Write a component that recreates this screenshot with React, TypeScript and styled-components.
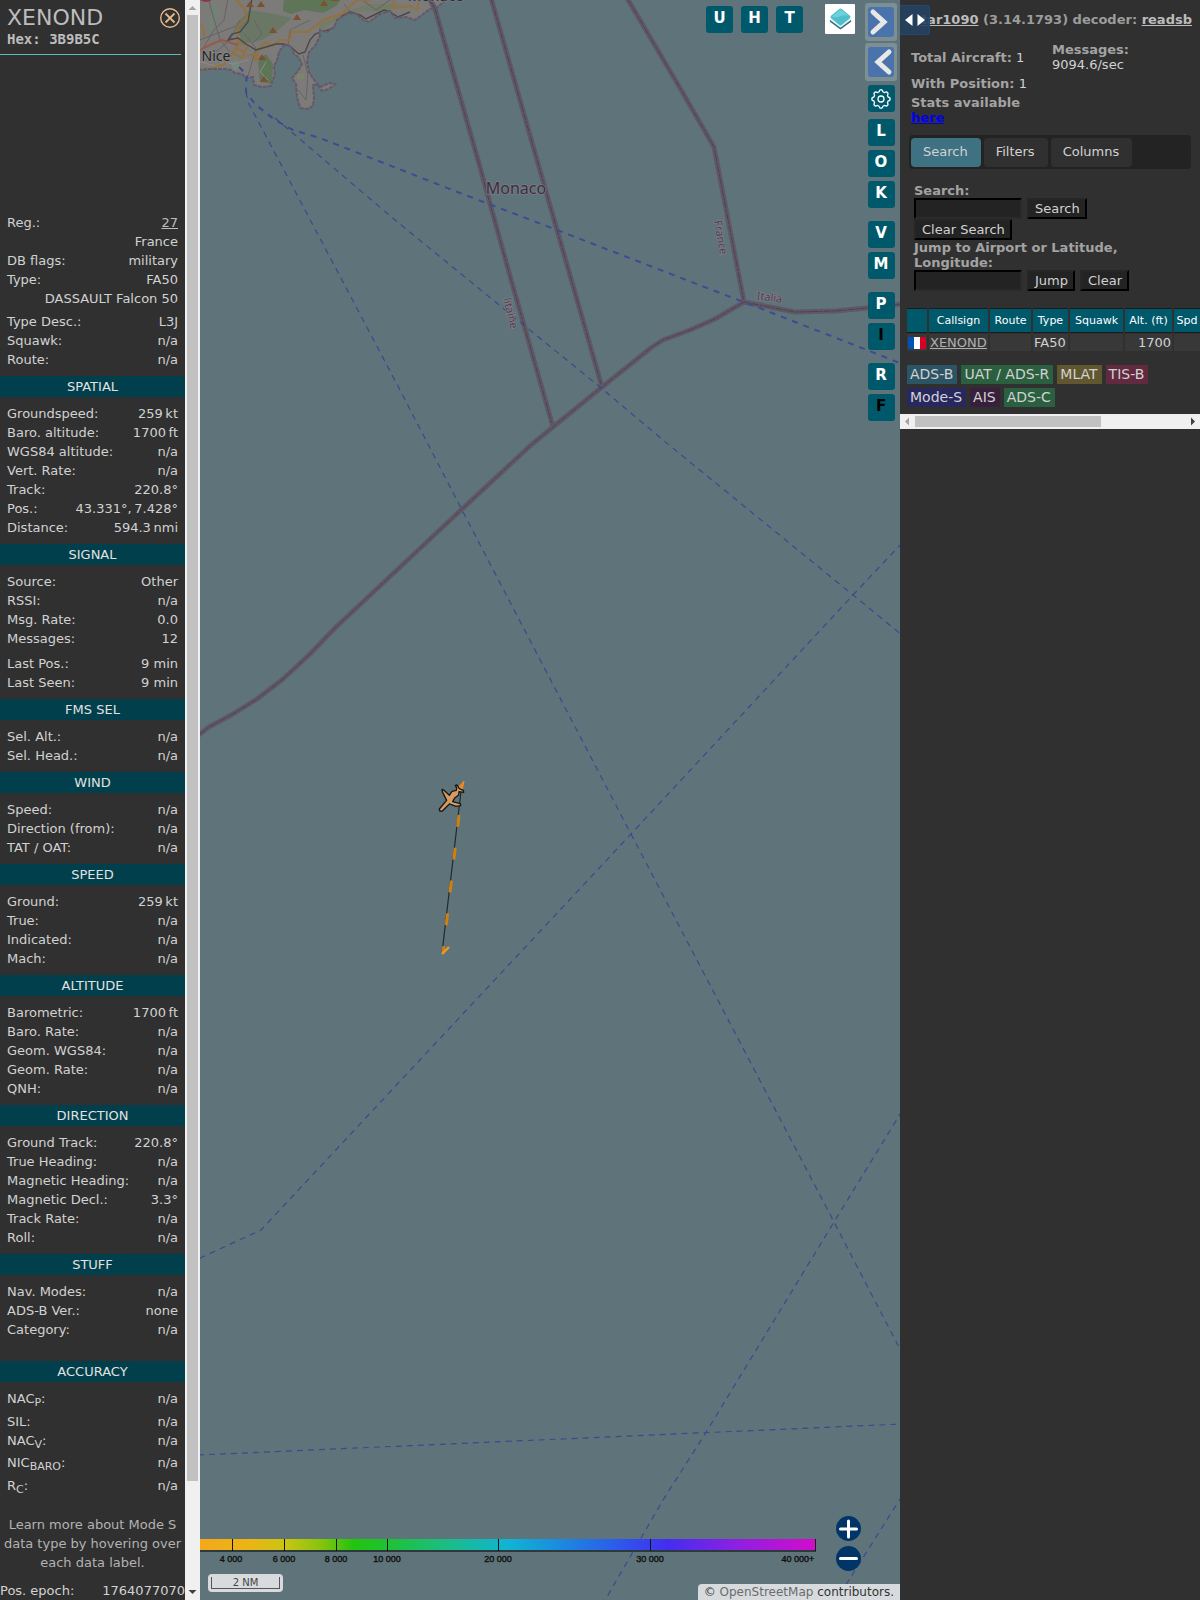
import React from "react";
import styled, { createGlobalStyle } from "styled-components";

const Global = createGlobalStyle`
  * { box-sizing: border-box; }
  html, body { margin: 0; background: #303030; }
  body { font-family: "DejaVu Sans", Verdana, sans-serif; font-size: 13px; color: #d2d2d2; }
  button, input { font-family: inherit; font-size: inherit; color: inherit; }
`;

const Page = styled.div`
  display: grid;
  grid-template-columns: 200px minmax(0, 1fr) 300px;
  height: 100vh;
  overflow: hidden;
`;

/* ---------- left panel ---------- */
const InfoPanel = styled.aside`
  display: flex;
  min-width: 0;
  overflow: hidden;
`;
const InfoBody = styled.div`
  width: 185px;
  flex: none;
`;
const InfoHead = styled.header`
  height: 55px;
  margin-right: 4px;
  padding: 5px 0 0 7px;
  border-bottom: 1px solid #5fb9c1;
  position: relative;
`;
const Callsign = styled.h1`
  margin: 0;
  font-size: 22px;
  line-height: 26px;
  font-weight: 400;
  color: #bdbdbd;
`;
const Hex = styled.div`
  font: bold 14px/16px "DejaVu Sans Mono", monospace;
  color: #bdbdbd;
`;
const Close = styled.button`
  position: absolute;
  right: 0;
  top: 8px;
  width: 22px;
  height: 20px;
  padding: 0;
  border: 0;
  background: none;
  svg { display: block; }
`;
const Photo = styled.div`
  height: 151px;
`;
const Group = styled.section<{ $tail?: number }>`
  padding: 7px 7px ${(p) => p.$tail ?? 7}px;
`;
const GroupTitle = styled.h2`
  margin: 0;
  background: #003f4b;
  color: #e2e2e2;
  font-size: 13px;
  line-height: 21px;
  font-weight: 400;
  text-align: center;
`;
const Row = styled.div<{ $gap?: number; $h?: number }>`
  display: flex;
  justify-content: space-between;
  height: ${(p) => p.$h ?? 19}px;
  line-height: 19px;
  margin-top: ${(p) => p.$gap ?? 0}px;
  white-space: nowrap;
  sub { font-size: 11px; line-height: 0; vertical-align: -3px; }
  a { color: #bdbdbd; }
`;
const Hint = styled.p`
  margin: 0;
  padding: 9px 3px 0;
  text-align: center;
  line-height: 19px;
  color: #b2b2b2;
`;
const Epoch = styled.div`
  display: flex;
  justify-content: space-between;
  margin-top: 9px;
  line-height: 19px;
`;

const ScrollTrack = styled.div<{ $row?: boolean }>`
  display: flex;
  flex-direction: ${(p) => (p.$row ? "row" : "column")};
  flex: none;
  ${(p) => (p.$row ? "height" : "width")}: 15px;
  background: #f0f0f0;
`;
const ScrollArrow = styled.span`
  width: 15px;
  height: 15px;
  flex: none;
  svg { display: block; }
`;
const ThumbArea = styled.div<{ $row?: boolean }>`
  flex: 1;
  padding: ${(p) => (p.$row ? "2px 0" : "0 2px")};
`;
const Thumb = styled.div<{ $row?: boolean }>`
  background: #c1c1c1;
  width: ${(p) => (p.$row ? "69%" : "100%")};
  height: ${(p) => (p.$row ? "100%" : "93.4%")};
`;

type Item = { l: React.ReactNode; v?: React.ReactNode; gap?: number; h?: number };
const na = "n/a";
const identity: Item[] = [
  { l: "Reg.:", v: <a href="#reg">27</a> },
  { l: "", v: "France" },
  { l: "DB flags:", v: "military" },
  { l: "Type:", v: "FA50" },
  { l: "", v: "DASSAULT Falcon 50" },
  { l: "Type Desc.:", v: "L3J", gap: 4 },
  { l: "Squawk:", v: na },
  { l: "Route:", v: na },
];
const groups: { title: string; tail?: number; items: Item[] }[] = [
  { title: "SPATIAL", items: [
    { l: "Groundspeed:", v: "259\u202fkt" },
    { l: "Baro. altitude:", v: "1700\u202fft" },
    { l: "WGS84 altitude:", v: na },
    { l: "Vert. Rate:", v: na },
    { l: "Track:", v: "220.8°" },
    { l: "Pos.:", v: "43.331°,\u202f7.428°" },
    { l: "Distance:", v: "594.3\u202fnmi" },
  ] },
  { title: "SIGNAL", items: [
    { l: "Source:", v: "Other" },
    { l: "RSSI:", v: na },
    { l: "Msg. Rate:", v: "0.0" },
    { l: "Messages:", v: "12" },
    { l: "Last Pos.:", v: "9 min", gap: 6 },
    { l: "Last Seen:", v: "9 min" },
  ] },
  { title: "FMS SEL", items: [{ l: "Sel. Alt.:", v: na }, { l: "Sel. Head.:", v: na }] },
  { title: "WIND", items: [{ l: "Speed:", v: na }, { l: "Direction (from):", v: na }, { l: "TAT / OAT:", v: na }] },
  { title: "SPEED", items: [
    { l: "Ground:", v: "259\u202fkt" },
    { l: "True:", v: na },
    { l: "Indicated:", v: na },
    { l: "Mach:", v: na },
  ] },
  { title: "ALTITUDE", items: [
    { l: "Barometric:", v: "1700\u202fft" },
    { l: "Baro. Rate:", v: na },
    { l: "Geom. WGS84:", v: na },
    { l: "Geom. Rate:", v: na },
    { l: "QNH:", v: na },
  ] },
  { title: "DIRECTION", items: [
    { l: "Ground Track:", v: "220.8°" },
    { l: "True Heading:", v: na },
    { l: "Magnetic Heading:", v: na },
    { l: "Magnetic Decl.:", v: "3.3°" },
    { l: "Track Rate:", v: na },
    { l: "Roll:", v: na },
  ] },
  { title: "STUFF", tail: 22, items: [
    { l: "Nav. Modes:", v: na },
    { l: "ADS-B Ver.:", v: "none" },
    { l: "Category:", v: na },
  ] },
  { title: "ACCURACY", items: [
    { l: <>NAC<sub>P</sub>:</>, v: na, h: 23 },
    { l: "SIL:", v: na },
    { l: <>NAC<sub>V</sub>:</>, v: na, h: 22 },
    { l: <>NIC<sub>BARO</sub>:</>, v: na, h: 23 },
    { l: <>R<sub>C</sub>:</>, v: na, h: 23 },
  ] },
];

const Rows = ({ items }: { items: Item[] }) => (
  <>
    {items.map((it, i) => (
      <Row key={i} $gap={it.gap} $h={it.h}>
        <span>{it.l}</span>
        <span>{it.v}</span>
      </Row>
    ))}
  </>
);

/* ---------- map ---------- */
const MapArea = styled.main`
  position: relative;
  background: #5e747a;
  overflow: hidden;
`;
const MapSvg = styled.svg`
  display: block;
  width: 100%;
  height: 100%;
`;
const TopBar = styled.div`
  position: absolute;
  top: 4px;
  right: 45px;
  display: flex;
  align-items: center;
  gap: 8px;
`;
const KeyButton = styled.button<{ $off?: boolean }>`
  width: 27px;
  height: 27px;
  padding: 0 0 2px;
  border: 0;
  border-radius: 3px;
  background: #00596b;
  color: ${(p) => (p.$off ? "#000" : "#fff")};
  font-size: 15px;
  line-height: 25px;
  font-weight: 700;
  text-align: center;
  svg { display: block; margin: 2px auto 0; }
`;
const LayersButton = styled.button`
  width: 30px;
  height: 30px;
  margin-left: 14px;
  padding: 0;
  border: 0;
  border-radius: 1px;
  background: #fff;
  svg { display: block; }
`;
const SideBar = styled.div`
  position: absolute;
  top: 3px;
  right: 3px;
  display: flex;
  flex-direction: column;
  align-items: center;
`;
const KeyGroup = styled.div<{ $top: number }>`
  display: flex;
  flex-direction: column;
  gap: 4px;
  margin-top: ${(p) => p.$top}px;
`;
const ArrowButton = styled.button`
  width: 32px;
  height: 38px;
  margin-bottom: 2px;
  padding: 4px 3px;
  border: 0;
  border-radius: 3px;
  background: #7c8f95;
  svg { display: block; }
`;
const Legend = styled.div`
  position: absolute;
  left: 0;
  bottom: 30px;
  svg { display: block; }
`;
const ScaleBox = styled.div`
  position: absolute;
  left: 8px;
  bottom: 8px;
  padding: 3px;
  border-radius: 4px;
  background: #d7dbdd;
`;
const ScaleInner = styled.div`
  width: 69px;
  height: 12px;
  border: 1px solid #555;
  border-top: 0;
  font-size: 10px;
  line-height: 11px;
  text-align: center;
  color: #444;
`;
const ZoomBox = styled.div`
  position: absolute;
  right: 39px;
  bottom: 29px;
  display: flex;
  flex-direction: column;
  gap: 5px;
`;
const ZoomButton = styled.button`
  width: 25px;
  height: 25px;
  padding: 0;
  border: 0;
  border-radius: 50%;
  background: #013568;
  svg { display: block; }
`;
const Attribution = styled.div`
  position: absolute;
  right: 0;
  bottom: 0;
  padding: 0 6px;
  border-radius: 4px 0 0 0;
  background: #d7dbdd;
  color: #333;
  font-size: 12px;
  line-height: 16px;
  white-space: nowrap;
  a { color: #6b6b6b; text-decoration: none; }
`;

const coast =
  "M-2,70 L12,69 25,69 31,70 35,73 42,74 46,78 53,77 54,85 62,87 71,86 73,79 75,75 74,66 77,60 79,52 84,45 91,46 94,54 99,58 102,64 98,71 92,78 96,84 97,97 100,108 107,109 113,106 114,98 113,85 118,85 122,91 129,89 135,84 130,83 120,87 114,80 109,72 107,62 109,52 115,46 120,36 120,30 127,32 134,27 137,20 148,13 157,14 163,20 169,22 180,14 190,11 195,18 206,17 215,20 222,15 230,9 236,8 240,5 248,-2 248,-10 -2,-10Z";
const borders = [
  "M229,-2 L235,9 278,160 310,276 353,427",
  "M291,-2 L337,160 402,387",
  "M427,-2 L480,88 514,147 544,302",
  "M702,304 L667,308 635,311 595,312 544,302 515,319 490,330 463,340 452,347 402,387 353,427 331,445 261,510 135,628 110,654 83,679 57,699 33,714 9,727 -4,737",
];
const ferries = [
  "M75,118 L195,220 260,273 315,318 400,387 463,440 653,595 702,635",
  "M46,92 L48,102 200,390 262,510 431,834 634,1222 702,1353",
  "M702,543 L653,595 431,834 61,1230 -2,1259",
  "M702,1111 L634,1222 505,1434 463,1500 404,1602",
  "M-2,1455 L702,1424",
  "M702,1496 L647,1583 635,1602",
];
const peaks = [[50, 4], [61, 4], [73, 30], [97, 17], [124, 3], [62, 57], [64, 79], [135, -2]];

const ChartMap = () => (
  <MapSvg viewBox="0 0 700 1600" preserveAspectRatio="xMidYMin slice" role="img" aria-label="Map">
    <defs><clipPath id="land"><path d={coast} /></clipPath></defs>
    <path d={coast} fill="#7c7b79" />
    <g clipPath="url(#land)" fill="none">
      <path d="M84,-2 L83,11 91,14 104,10 123,13 136,6 142,-2Z" fill="#5f7558" />
      <path d="M36,24 L50,10 75,14 92,18 76,32 62,40 42,44Z" fill="#6b7765" />
      <path d="M58,62 L66,54 73,64 72,84 60,82Z" fill="#5f7558" />
      <path d="M118,24 L150,10 170,4 200,4 190,10 150,12 120,30Z" fill="#727c66" />
      <path d="M12,-2 L20,12 14,28 8,34M0,-2Z" fill="#748177" />
      <path d="M31,62 L38,60 40,70 33,70Z" fill="#74897b" />
      <path d="M97,74 L104,73 104,79 97,79Z" fill="#7b8569" />
      <path d="M2,50 L14,30 24,20 28,-2 M8,-2 L20,40 30,52 M0,40 L36,26 M6,60 L30,40 40,20 M44,34 L56,48 48,76 M86,60 L90,30 110,20 M103,55 L108,75 106,100 98,90 M54,20 L62,34 52,44 M144,4 L152,14 M160,-2 L176,10 190,0" stroke="#646464" />
      <path d="M0,62 L16,66 24,62 34,64 48,60M66,62 L60,72 68,80" stroke="#8b8b89" />
      <path d="M35,-2 L45,10 47,18 38,26 37,36 39,44 M-2,70 L12,68 24,64 32,54 M47,56 L55,54 56,62 58,50 66,42 72,46 80,40 90,40 91,32 108,32 124,19 142,14 152,4 160,-2 M192,8 L195,-2 M192,8 L210,6 217,10 220,-2 M-2,20 L4,30 4,38 M152,-2 L170,1" stroke="#94713d" strokeWidth="2" />
      <path d="M39,42 L47,47 42,58 33,53Z M35,48 L45,52" stroke="#94713d" strokeWidth="2" />
      <path d="M-2,51 L12,44 22,40 38,45" stroke="#9b5846" strokeWidth="2" />
      <path d="M52,-2 L48,22 40,32 32,34 28,40 38,38 46,44 56,50 76,44 84,44 92,48 99,54 105,52 110,40 115,34 134,28 142,16 150,12 160,15 166,19 174,15 184,10 190,12 198,17 210,12" stroke="#484848" strokeWidth="1.4" />
      <ellipse cx="6" cy="-3" rx="7" ry="5" fill="#8a3848" />
      {peaks.map(([x, y]) => (
        <path key={`${x}-${y}`} d={`M${x},${y - 3} l4,6 h-8z`} fill="#7b5130" />
      ))}
    </g>
    <path d={coast} fill="none" stroke="#665868" strokeWidth="2" strokeDasharray="4 1" />
    {borders.map((d) => (
      <g key={d} fill="none" strokeLinejoin="round">
        <path d={d} stroke="#5e5966" strokeWidth="5" />
        <path d={d} stroke="#553d52" strokeWidth="1" strokeDasharray="7 1 3 1" />
      </g>
    ))}
    <path d="M39,67 L47,75 46,83 46,92 55,104 75,120 93,130 120,138 260,193 357,230 533,298 544,302 667,350 702,364" fill="none" stroke="#414a90" strokeWidth="2" strokeDasharray="6 6" />
    {ferries.map((d) => (
      <path key={d} d={d} fill="none" stroke="#3f478e" strokeWidth="1.2" strokeDasharray="6 5" />
    ))}
    <g fontFamily="Noto Sans, sans-serif" stroke="#7b7d86" strokeWidth="1.5" paintOrder="stroke" textAnchor="middle">
      <text x="16" y="61" fontSize="14" fill="#202020" stroke="#888">Nice</text>
      <text x="236" y="1" fontSize="15" fill="#302c30">Monaco</text>
      <text x="316" y="194" fontSize="16" fill="#3d2c3e">Monaco</text>
      <g fontSize="11" fill="#553d52">
        <text transform="translate(307 314) rotate(76)">litaine</text>
        <text transform="translate(517 238) rotate(80)">France</text>
        <text transform="translate(569 301) rotate(8)">Italia</text>
      </g>
    </g>
    <path d="M262,783 L242,953" stroke="#202a2d" strokeWidth="1.2" />
    <path d="M259,815 L243,953" stroke="#cf8010" strokeWidth="3" strokeDasharray="12 21" />
    <path d="M242,954 L249,947" stroke="#ef9a28" strokeWidth="2.4" />
    <path d="M257,789 L264,781 262,791Z" fill="#ef8b20" stroke="#ef8b20" />
    <path transform="translate(220 760) scale(.3333)" d="M60,154 L58,147 80,121 67,95 66,88 72,91 88,106 96,94 109,91 110,84 106,76 111,75 118,86 130,91 131,97 117,95 116,105 104,114 98,125 121,131 122,137 108,139 88,132 67,153Z" fill="#d69b60" stroke="#171717" strokeWidth="4" strokeLinejoin="round" />
  </MapSvg>
);

const ticks: [number, string, number][] = [
  [32, "4 000", 31], [84, "6 000", 84], [136, "8 000", 136], [187, "10 000", 187], [298, "20 000", 298], [450, "30 000", 450], [615, "40 000+", 598],
];

const Chevron = ({ back }: { back?: boolean }) => (
  <svg width="26" height="30" viewBox="0 0 26 30">
    <rect width="26" height="30" rx="3" fill="#4973aa" />
    <path d={back ? "M21,5 L10,15 21,25" : "M5,5 L16,15 5,25"} fill="none" stroke="#e8e8e8" strokeWidth="5" strokeLinecap="round" strokeLinejoin="miter" />
  </svg>
);

const gearPoints = Array.from({ length: 64 }, (_, i) => {
  const a = (i / 64) * Math.PI * 2;
  const r = 8.2 + 0.9 * Math.tanh(3 * Math.cos(a * 8));
  return `${(10 + r * Math.sin(a)).toFixed(2)},${(10 - r * Math.cos(a)).toFixed(2)}`;
}).join(" ");

/* ---------- right panel ---------- */
const SidePanel = styled.aside`
  position: relative;
  min-width: 0;
  overflow: hidden;
`;
const SplitToggle = styled.button`
  position: absolute;
  left: 0;
  top: 5px;
  width: 30px;
  height: 30px;
  padding: 0;
  border: 1px solid #1f4a78;
  border-left: 0;
  border-radius: 0 3px 3px 0;
  background: rgba(38, 66, 98, 0.9);
  svg { display: block; }
`;
const Version = styled.div`
  padding: 12px 8px 0 0;
  line-height: 15px;
  font-weight: 700;
  text-align: right;
  white-space: nowrap;
  color: #9c9c9c;
  a { color: #bcbcbc; }
`;
const Stats = styled.div`
  display: grid;
  grid-template-columns: 141px 1fr;
  padding: 15px 8px 0 11px;
  line-height: 15px;
  b { color: #a3a3a3; }
`;
const StatCol = styled.div<{ $top?: number }>`
  display: flex;
  flex-direction: column;
  padding-top: ${(p) => p.$top ?? 0}px;
`;
const Stat = styled.div<{ $after?: number }>`
  margin-bottom: ${(p) => p.$after ?? 0}px;
  a { color: #00e; display: block; width: max-content; }
`;
const TabBar = styled.div`
  display: flex;
  gap: 3px;
  margin: 10px 9px 0;
  padding: 3px 2px 2px;
  border-radius: 4px;
  background: #232323;
`;
const Tab = styled.button<{ $on?: boolean }>`
  height: 29px;
  padding: 0 13px 2px 12px;
  border: 0;
  border-radius: 4px;
  background: ${(p) => (p.$on ? "#3e7181" : "#303030")};
`;
const SearchForm = styled.form`
  padding: 14px 14px 0;
  line-height: 15px;
  label { display: block; font-weight: 700; color: #a3a3a3; }
`;
const FormLine = styled.div`
  display: flex;
  align-items: center;
  gap: 5px;
`;
const Field = styled.input`
  width: 108px;
  height: 21px;
  padding: 0 2px;
  border: 2px solid;
  border-color: #000 #2a2a2a #2a2a2a #000;
  background: #232323;
`;
const FormButton = styled.button`
  height: 21px;
  padding: 0 5px 0 6px;
  border: 2px solid;
  border-color: #262626 #000 #000 #262626;
  background: #232323;
  line-height: 16px;
  white-space: nowrap;
`;
const TableWrap = styled.div`
  padding: 16px 0 0 5px;
  overflow: hidden;
`;
const Planes = styled.table`
  width: 297px;
  table-layout: fixed;
  border-collapse: separate;
  border-spacing: 2px 1px;
  th {
    height: 25px;
    padding: 0;
    background: #00596b;
    border: solid #1a1a1a;
    border-width: 1px 0;
    color: #fff;
    font-size: 11px;
    font-weight: 400;
  }
  td { height: 17px; padding: 0 1px; background: #383838; line-height: 17px; }
  td a { color: #b0b0b0; }
  svg { display: block; }
`;
const Num = styled.td`
  text-align: right;
`;
const Sources = styled.div`
  display: flex;
  flex-wrap: wrap;
  gap: 4px;
  padding: 13px 40px 7px 7px;
`;
const Source = styled.span<{ $bg: string }>`
  padding: 0 4px 0 3px;
  background: ${(p) => p.$bg};
  font-size: 14px;
  line-height: 19px;
  white-space: nowrap;
`;
const columns: [string, number][] = [["", 20], ["Callsign", 59], ["Route", 41], ["Type", 35], ["Squawk", 53], ["Alt. (ft)", 47], ["Spd", 26]];
const sources: [string, string][] = [
  ["ADS-B", "#2b5465"], ["UAT / ADS-R", "#2a6040"], ["MLAT", "#60562f"], ["TIS-B", "#622a40"], ["Mode-S", "#28285f"], ["AIS", "#38203c"], ["ADS-C", "#2a6040"],
];

const Arrow = ({ d, c }: { d: string; c: string }) => (
  <ScrollArrow><svg width="15" height="15" viewBox="0 0 15 15"><path d={d} fill={c} /></svg></ScrollArrow>
);

export default function App() {
  return (
    <Page>
      <Global />
      <InfoPanel>
        <InfoBody>
          <InfoHead>
            <Callsign>XENOND</Callsign>
            <Hex>Hex: 3B9B5C</Hex>
            <Close type="button" aria-label="Close">
              <svg width="22" height="20" viewBox="0 0 22 20" fill="none" stroke="#e3b88a" strokeWidth="1.4">
                <circle cx="11" cy="10" r="9.3" />
                <path d="M6.5,5.5 L15.5,14.5 M15.5,5.5 L6.5,14.5" strokeWidth="1.8" />
              </svg>
            </Close>
          </InfoHead>
          <Photo />
          <Group><Rows items={identity} /></Group>
          {groups.map((g) => (
            <React.Fragment key={g.title}>
              <GroupTitle>{g.title}</GroupTitle>
              <Group $tail={g.tail}><Rows items={g.items} /></Group>
            </React.Fragment>
          ))}
          <Hint>Learn more about Mode S data type by hovering over each data label.</Hint>
          <Epoch><span>Pos. epoch:</span><span>1764077070</span></Epoch>
        </InfoBody>
        <ScrollTrack>
          <Arrow d="M3.5,10 L7.5,6 11.5,10Z" c="#a3a3a3" />
          <ThumbArea><Thumb /></ThumbArea>
          <Arrow d="M3.5,5 L7.5,9 11.5,5Z" c="#404040" />
        </ScrollTrack>
      </InfoPanel>

      <MapArea>
        <ChartMap />
        <TopBar>
          <KeyButton type="button">U</KeyButton>
          <KeyButton type="button">H</KeyButton>
          <KeyButton type="button">T</KeyButton>
          <LayersButton type="button" aria-label="Layers">
            <svg width="30" height="30" viewBox="0 0 30 30" strokeLinejoin="round" strokeLinecap="round">
              <path d="M6,17 L15.5,24 25,17" fill="none" stroke="#2f6f7c" strokeWidth="2.5" />
              <path d="M6,15.5 L15.5,22.5 25,15.5" fill="none" stroke="#e8f2f3" strokeWidth="2" />
              <path d="M7,13 L15.5,6 24,13 15.5,20Z" fill="#50bfcd" stroke="#50bfcd" strokeWidth="3" />
              <path d="M7,12.500 L15.500,5.500 24,12 C18,9 12,15 7,12.500Z" fill="#6fd0da" />
            </svg>
          </LayersButton>
        </TopBar>
        <SideBar>
          <ArrowButton type="button" aria-label="Expand"><Chevron /></ArrowButton>
          <ArrowButton type="button" aria-label="Collapse"><Chevron back /></ArrowButton>
          <KeyGroup $top={2}>
            <KeyButton type="button" aria-label="Settings">
              <svg width="20" height="20" viewBox="0 0 20 20" fill="none" stroke="#fff" strokeWidth="1.3">
                <polygon points={gearPoints} strokeLinejoin="round" />
                <circle cx="10" cy="10" r="3" />
              </svg>
            </KeyButton>
          </KeyGroup>
          <KeyGroup $top={7}>
            <KeyButton type="button">L</KeyButton>
            <KeyButton type="button">O</KeyButton>
            <KeyButton type="button">K</KeyButton>
          </KeyGroup>
          <KeyGroup $top={13}>
            <KeyButton type="button">V</KeyButton>
            <KeyButton type="button">M</KeyButton>
          </KeyGroup>
          <KeyGroup $top={13}>
            <KeyButton type="button">P</KeyButton>
            <KeyButton type="button" $off>I</KeyButton>
          </KeyGroup>
          <KeyGroup $top={13}>
            <KeyButton type="button">R</KeyButton>
            <KeyButton type="button" $off>F</KeyButton>
          </KeyGroup>
        </SideBar>
        <Legend>
          <svg width="620" height="31" viewBox="0 0 620 31" role="img" aria-label="Altitude scale">
            <defs>
              <linearGradient id="alt">
                <stop offset="0" stopColor="#f3a81c" />
                <stop offset=".08" stopColor="#ebb515" />
                <stop offset=".14" stopColor="#c9c512" />
                <stop offset=".2" stopColor="#82c40e" />
                <stop offset=".25" stopColor="#22c40e" />
                <stop offset=".3" stopColor="#1fc22e" />
                <stop offset=".4" stopColor="#1bbd85" />
                <stop offset=".5" stopColor="#10b4d4" />
                <stop offset=".57" stopColor="#1a92dc" />
                <stop offset=".67" stopColor="#2a5fea" />
                <stop offset=".76" stopColor="#432ef0" />
                <stop offset=".87" stopColor="#8d20e2" />
                <stop offset="1" stopColor="#d20ccc" />
              </linearGradient>
            </defs>
            <rect y="1" width="616" height="12" fill="#2c3a3d" />
            <rect width="615" height="11" fill="url(#alt)" />
            <g fontFamily="Liberation Sans, Arial, sans-serif" fontSize="9" textAnchor="middle" fill="#111" stroke="#111" strokeWidth=".4">
              {ticks.map(([x, t, tx]) => (
                <React.Fragment key={t}>
                  <path d={`M${x}.5,0 V12`} strokeWidth="1" />
                  <text x={tx} y="23">{t}</text>
                </React.Fragment>
              ))}
            </g>
          </svg>
        </Legend>
        <ScaleBox><ScaleInner>2 NM</ScaleInner></ScaleBox>
        <ZoomBox>
          <ZoomButton type="button" aria-label="Zoom in">
            <svg width="25" height="25" viewBox="0 0 25 25"><path d="M4.500,13 H20.500 M12.500,5 V21" stroke="#fff" strokeWidth="3" strokeLinecap="round" /></svg>
          </ZoomButton>
          <ZoomButton type="button" aria-label="Zoom out">
            <svg width="25" height="25" viewBox="0 0 25 25"><path d="M4.500,12.500 H20.500" stroke="#fff" strokeWidth="3" strokeLinecap="round" /></svg>
          </ZoomButton>
        </ZoomBox>
        <Attribution>© <a href="#osm">OpenStreetMap</a> contributors.</Attribution>
      </MapArea>

      <SidePanel>
        <Version>
          <a href="#tar1090">tar1090</a> (3.14.1793) decoder: <a href="#readsb">readsb</a>
        </Version>
        <SplitToggle type="button" aria-label="Resize sidebar">
          <svg width="29" height="28" viewBox="0 0 29 28" fill="#fff"><path d="M12.500,8 V20 L5,14Z M17.500,8 V20 L25,14Z" /></svg>
        </SplitToggle>
        <Stats>
          <StatCol $top={8}>
            <Stat $after={11}><b>Total Aircraft:</b> 1</Stat>
            <Stat $after={4}><b>With Position:</b> 1</Stat>
            <Stat><b>Stats available <a href="#stats">here</a></b></Stat>
          </StatCol>
          <StatCol>
            <b>Messages:</b>
            <span>9094.6/sec</span>
          </StatCol>
        </Stats>
        <TabBar>
          <Tab type="button" $on>Search</Tab>
          <Tab type="button">Filters</Tab>
          <Tab type="button">Columns</Tab>
        </TabBar>
        <SearchForm>
          <label htmlFor="search">Search:</label>
          <FormLine>
            <Field id="search" />
            <FormButton type="button">Search</FormButton>
          </FormLine>
          <FormButton type="button">Clear Search</FormButton>
          <label htmlFor="jump">Jump to Airport or Latitude, Longitude:</label>
          <FormLine>
            <Field id="jump" />
            <FormButton type="button">Jump</FormButton>
            <FormButton type="button">Clear</FormButton>
          </FormLine>
        </SearchForm>
        <TableWrap>
          <Planes>
            <colgroup>{columns.map(([n, w]) => <col key={n} width={w} />)}</colgroup>
            <thead><tr>{columns.map(([n]) => <th key={n}>{n}</th>)}</tr></thead>
            <tbody>
              <tr>
                <td>
                  <svg width="18" height="12" viewBox="0 0 18 12"><path fill="#0052b4" d="M0,0h6v12H0z" /><path fill="#fff" d="M6,0h6v12H6z" /><path fill="#d80027" d="M12,0h6v12h-6z" /></svg>
                </td>
                <td><a href="#xenond">XENOND</a></td>
                <td />
                <td>FA50</td>
                <td />
                <Num>1700</Num>
                <td />
              </tr>
            </tbody>
          </Planes>
        </TableWrap>
        <Sources>
          {sources.map(([n, c]) => <Source key={n} $bg={c}>{n}</Source>)}
        </Sources>
        <ScrollTrack $row>
          <Arrow d="M9,3.500 L5,7.500 9,11.500Z" c="#a3a3a3" />
          <ThumbArea $row><Thumb $row /></ThumbArea>
          <Arrow d="M6,3.500 L10,7.500 6,11.500Z" c="#404040" />
        </ScrollTrack>
      </SidePanel>
    </Page>
  );
}
